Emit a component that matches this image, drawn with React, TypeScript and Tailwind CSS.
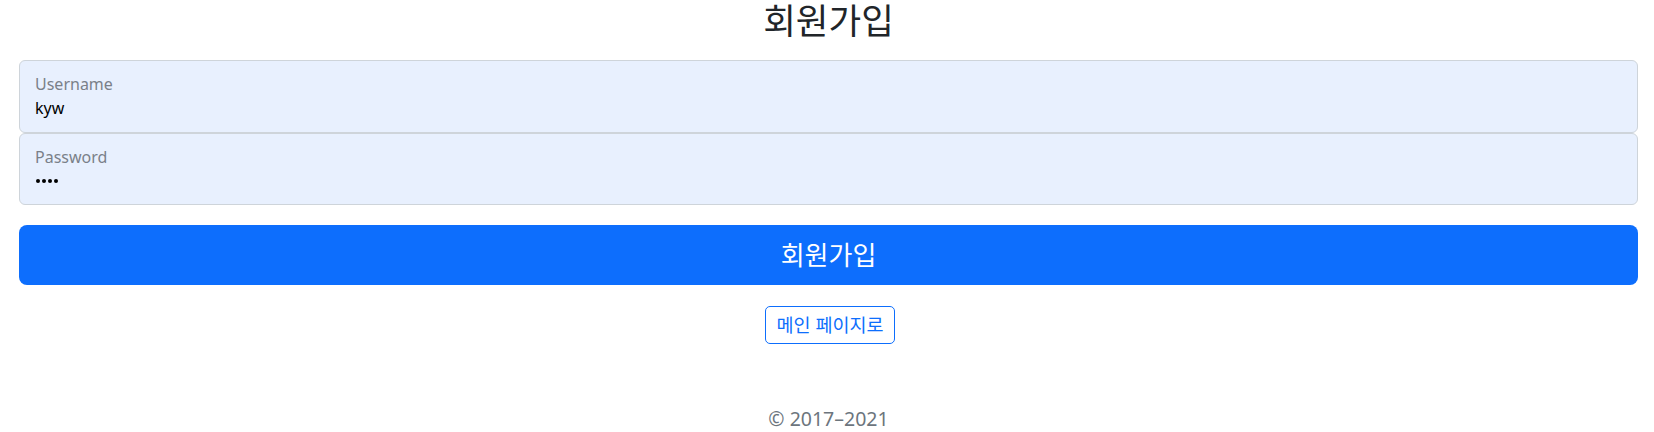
import React from "react";

export default function App() {
  const font = { fontFamily: "'Noto Sans', 'Noto Sans CJK KR', sans-serif" };
  return (
    <div className="w-[1654px] h-[432px] bg-white overflow-hidden" style={font}>
      <div className="pl-[19px] pr-[16px]">
        <h1 className="text-center text-[35.5px] leading-[40px] font-normal text-[#212529] mb-[20px]">
          회원가입
        </h1>
        <div className="h-[72.5px] border border-[#ced4da] rounded-[6px] bg-[#e8f0fe] px-[15px] pt-[13px]">
          <div className="text-[16px] leading-[20px] text-[#7a8089]">Username</div>
          <div className="mt-[4px] text-[16px] leading-[20px] text-black">kyw</div>
        </div>
        <div className="h-[72.5px] border border-[#ced4da] rounded-[6px] bg-[#e8f0fe] px-[15px] pt-[13px]">
          <div className="text-[16px] leading-[20px] text-[#7a8089]">Password</div>
          <div className="mt-[4px] h-[20px] flex items-center gap-[2px] pl-[1px]">
            <span className="w-[4px] h-[4px] rounded-full bg-black" />
            <span className="w-[4px] h-[4px] rounded-full bg-black" />
            <span className="w-[4px] h-[4px] rounded-full bg-black" />
            <span className="w-[4px] h-[4px] rounded-full bg-black" />
          </div>
        </div>
        <button className="mt-[19.5px] w-full h-[60px] rounded-[8px] bg-[#0d6efd] text-white text-[26px] leading-[30px]">
          회원가입
        </button>
        <div className="flex justify-center mt-[21px] pl-[3px]">
          <a className="h-[38.5px] px-[11px] border border-[#0d6efd] rounded-[5px] text-[#0d6efd] text-[18.5px] leading-[26px] flex items-center">
            메인 페이지로
          </a>
        </div>
        <p className="text-center mt-[60px] text-[#6c757d] text-[19.5px] leading-[30px]">
          © 2017–2021
        </p>
      </div>
    </div>
  );
}
